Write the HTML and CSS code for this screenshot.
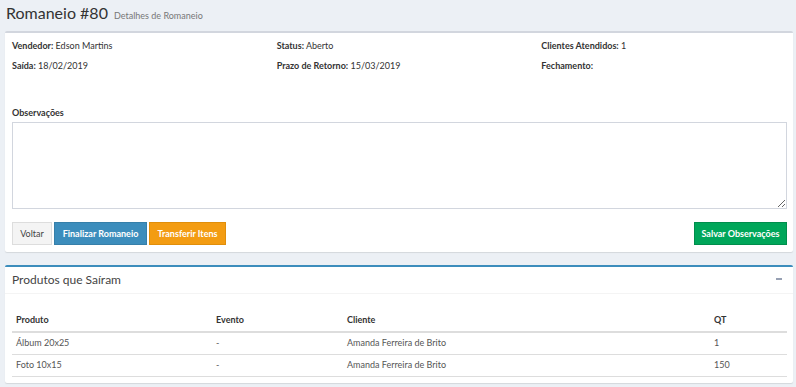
FILE: index.html
```html
<!DOCTYPE html>
<html lang="pt-BR">
<head>
<meta charset="utf-8">
<title>Romaneio #80</title>
<link rel="stylesheet" href="styles.css">
</head>
<body>
<header class="content-header">
  <h1>Romaneio #80 <small>Detalhes de Romaneio</small></h1>
</header>
<main class="content">
  <section class="box box-default">
    <div class="box-body">
      <div class="info-grid">
        <div class="info"><b>Vendedor:</b> Edson Martins</div>
        <div class="info"><b>Status:</b> Aberto</div>
        <div class="info"><b>Clientes Atendidos:</b> 1</div>
        <div class="info"><b>Saída:</b> 18/02/2019</div>
        <div class="info"><b>Prazo de Retorno:</b> 15/03/2019</div>
        <div class="info"><b>Fechamento:</b></div>
      </div>
      <div class="obs">
        <label class="obs-label" for="obs">Observações</label>
        <textarea id="obs" class="obs-input"></textarea>
      </div>
      <div class="actions">
        <div class="actions-left">
          <button class="btn btn-default">Voltar</button>
          <button class="btn btn-primary">Finalizar Romaneio</button>
          <button class="btn btn-warning">Transferir Itens</button>
        </div>
        <button class="btn btn-success">Salvar Observações</button>
      </div>
    </div>
  </section>

  <section class="box box-primary">
    <div class="box-header">
      <h3 class="box-title">Produtos que Saíram</h3>
      <span class="box-tool" aria-label="Minimizar"></span>
    </div>
    <div class="box-body table-body">
      <table class="table">
        <thead>
          <tr><th class="c1">Produto</th><th class="c2">Evento</th><th class="c3">Cliente</th><th class="c4">QT</th></tr>
        </thead>
        <tbody>
          <tr><td>Álbum 20x25</td><td>-</td><td>Amanda Ferreira de Brito</td><td>1</td></tr>
          <tr><td>Foto 10x15</td><td>-</td><td>Amanda Ferreira de Brito</td><td>150</td></tr>
        </tbody>
      </table>
    </div>
  </section>
</main>
</body>
</html>
```
FILE: styles.css
```css
* { box-sizing: border-box; }
html, body { margin: 0; padding: 0; }
body {
  background: #ecf0f5;
  font-family: Lato, "Open Sans", sans-serif;
  font-size: 9px;
  color: #333;
  width: 796px;
  height: 387px;
  overflow: hidden;
}
.content-header { padding: 2px 6px 0; height: 31px; }
.content-header h1 {
  margin: 0;
  font-weight: 400;
  font-size: 16px;
  line-height: 22px;
  color: #333;
}
.content-header small {
  font-size: 9px;
  color: #777;
  margin-left: 2px;
}
.content { padding: 0 3px 0 5px; }
.box {
  background: #fff;
  border-top: 2px solid #d2d6de;
  border-radius: 2px;
  box-shadow: 0 1px 1px rgba(0,0,0,0.1);
  margin-bottom: 13px;
}
.box-primary { border-top-color: #3c8dbc; }
.box-default .box-body { padding: 6px 7px 7px; }
.info-grid {
  display: grid;
  grid-template-columns: repeat(3, 1fr);
  margin: 0 -10px;
  row-gap: 7px;
}
.info { padding: 0 10px; line-height: 13px; }
.info b { font-weight: 700; }
.obs { margin-top: 34px; }
.obs-label { display: block; font-weight: 700; line-height: 13px; margin-bottom: 3px; }
.obs-input {
  display: block;
  width: 775px;
  height: 87px;
  border: 1px solid #d2d6de;
  border-radius: 0;
  margin: 0;
  font-family: inherit;
}
.actions {
  display: flex;
  justify-content: space-between;
  margin-top: 13px;
  width: 775px;
}
.actions-left { display: flex; gap: 2px; }
.btn {
  height: 23px;
  padding: 0;
  font-family: inherit;
  font-size: 9px;
  font-weight: 700;
  white-space: nowrap;
  text-align: center;
  border: 1px solid transparent;
  border-radius: 0;
  color: #fff;
  cursor: pointer;
}
.btn-default { background: #f4f4f4; border-color: #ddd; color: #444; font-weight: 400; width: 40px; }
.btn-primary { background: #3c8dbc; border-color: #367fa9; width: 93px; }
.btn-warning { background: #f39c12; border-color: #e08e0b; width: 77px; }
.btn-success { background: #00a65a; border-color: #008d4c; width: 93px; }

.box-header {
  display: flex;
  align-items: center;
  justify-content: space-between;
  height: 27px;
  padding: 0 11px 2px 7px;
  border-bottom: 1px solid #f4f4f4;
}
.box-title { margin: 0; font-weight: 400; font-size: 12px; color: #444; }
.box-tool { display: block; width: 6px; height: 2px; background: #97a0b3; }
.table-body { padding: 15px 7px 6px; }
.table { width: 775px; border-collapse: collapse; }
.table th, .table td {
  text-align: left;
  padding: 0 4px;
  height: 22px;
  line-height: 12px;
  border-bottom: 1px solid #ddd;
  color: #333;
}
.table th { font-weight: 700; border-bottom-width: 2px; height: 23px; }
.table td { color: #555; }
.c1 { width: 200px; }
.c2 { width: 131px; }
.c3 { width: 367px; }
.c4 { width: 77px; }
```
